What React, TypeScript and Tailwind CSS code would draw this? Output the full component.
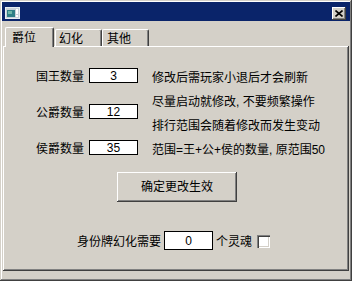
import React from "react";

const raised =
  "shadow-[inset_-1px_-1px_#404040,inset_1px_1px_#ffffff,inset_-2px_-2px_#808080]";

function Field({ value, tall }: { value: string; tall?: boolean }) {
  return (
    <div
      className={`w-[49px] ${
        tall ? "h-[19px]" : "h-[15px]"
      } border border-black bg-white flex items-center justify-center text-[12px] leading-none`}
    >
      {value}
    </div>
  );
}

function Row({ label, value }: { label: string; value: string }) {
  return (
    <div className="flex items-center h-[15px] gap-[5px]">
      <span className="w-[48px] text-[12px] leading-none mt-[2px]">{label}</span>
      <Field value={value} />
    </div>
  );
}

function TitleIcon() {
  return (
    <svg width="15" height="12" viewBox="0 0 15 12">
      <rect x="0" y="0" width="15" height="12" fill="#c8d0d8" />
      <rect x="0.5" y="0.5" width="14" height="11" fill="none" stroke="#e8eef2" />
      <rect x="2" y="3" width="8" height="7" fill="#2f7f86" />
      <rect x="3" y="4" width="4" height="3" fill="#6fb6a8" />
      <rect x="11" y="2" width="2" height="5" fill="#ffffff" />
      <rect x="11" y="8" width="2" height="2" fill="#ffffff" />
    </svg>
  );
}

export default function App() {
  return (
    <div className="min-h-screen bg-white text-black font-['Liberation_Sans','Noto_Sans_CJK_SC',sans-serif]">
      <div className="w-[352px] h-[281px] bg-[#d4d0c8] p-[2px] flex flex-col shadow-[inset_-1px_-1px_#404040,inset_1px_1px_#d4d0c8,inset_-2px_-2px_#808080,inset_2px_2px_#ffffff]">
        {/* title bar */}
        <div className="h-[19px] bg-[#0a246a] flex items-start justify-between pt-[5px] pl-[3px] pr-[4px]">
          <TitleIcon />
          <div className={`w-[14px] h-[13px] bg-[#d4d0c8] flex items-center justify-center ${raised}`}>
            <svg width="8" height="7" viewBox="0 0 8 7">
              <path d="M0.5 0.5 L7.5 6.5 M7.5 0.5 L0.5 6.5" stroke="#000" strokeWidth="1.6" />
            </svg>
          </div>
        </div>

        {/* tabs */}
        <div className="mt-[6px] h-[19px] flex items-end pl-[3px] relative z-10">
          <div className="h-[20px] -mb-px w-[49px] pl-[6px] pt-[3px] bg-[#d4d0c8] border-l border-t border-white border-r border-r-[#404040] rounded-t-[2px] shadow-[inset_-1px_0_#808080] text-[12px] leading-[14px]">
            爵位
          </div>
          <div className="h-[17px] w-[47px] ml-[1px] pl-[3px] pt-[2px] border-l border-t border-white border-r border-r-[#404040] rounded-t-[2px] shadow-[inset_-1px_0_#808080] text-[12px] leading-[14px]">
            幻化
          </div>
          <div className="h-[17px] w-[47px] pl-[4px] pt-[2px] border-l border-t border-white border-r border-r-[#404040] rounded-t-[2px] shadow-[inset_-1px_0_#808080] text-[12px] leading-[14px]">
            其他
          </div>
        </div>

        {/* panel */}
        <div className={`mx-[1px] h-[225px] flex flex-col ${raised}`}>
          <div className="flex items-start h-[116px] pl-[33px]">
            <div className="flex flex-col gap-[21px] pt-[22px]">
              <Row label="国王数量" value="3" />
              <Row label="公爵数量" value="12" />
              <Row label="侯爵数量" value="35" />
            </div>
            <div className="flex flex-col pt-[20px] pl-[14px] text-[12px] leading-[24px] whitespace-nowrap">
              <span>修改后需玩家小退后才会刷新</span>
              <span>尽量启动就修改, 不要频繁操作</span>
              <span>排行范围会随着修改而发生变动</span>
              <span>范围=王+公+侯的数量, 原范围50</span>
            </div>
          </div>

          <div
            className={`mt-[10px] ml-[114px] w-[120px] h-[30px] flex items-center justify-center text-[12px] leading-none ${raised}`}
          >
            确定更改生效
          </div>

          <div className="mt-[29px] pl-[74px] h-[19px] flex items-center text-[12px] leading-none">
            <span className="w-[84px] mt-[2px]">身份牌幻化需要</span>
            <div className="ml-[3px]">
              <Field value="0" tall />
            </div>
            <span className="ml-[3px] mt-[2px]">个灵魂</span>
            <div className="ml-[5px] mt-[2px] w-[13px] h-[13px] bg-white shadow-[inset_1px_1px_#808080,inset_2px_2px_#404040,inset_-1px_-1px_#ffffff,inset_-2px_-2px_#d4d0c8]" />
          </div>
        </div>
      </div>
    </div>
  );
}
